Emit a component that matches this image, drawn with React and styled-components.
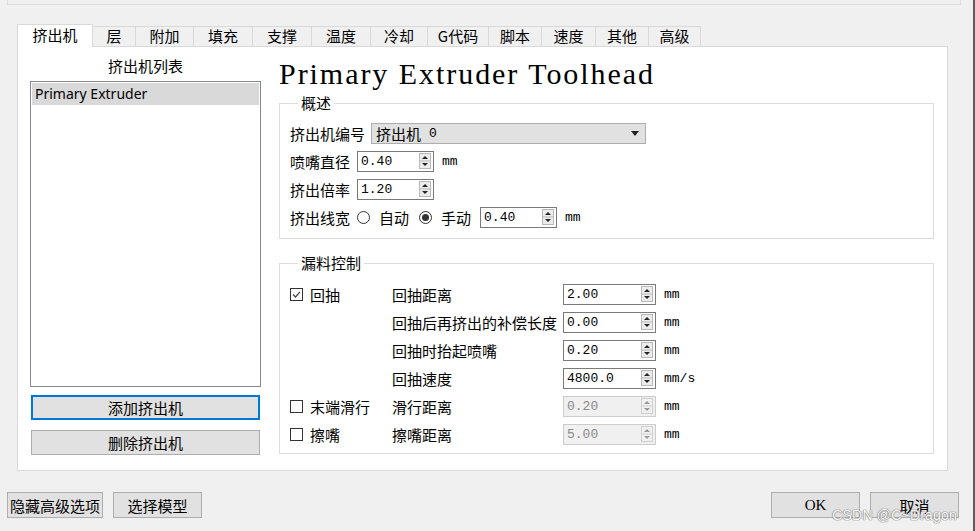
import React from 'react';
import styled, { createGlobalStyle } from 'styled-components';

const CJK = `"Noto Sans CJK SC", "Noto Sans", sans-serif`;
const MONO = `"Liberation Mono", "Noto Sans CJK SC", monospace`;

const Global = createGlobalStyle`
  html, body { margin: 0; padding: 0; background: #f0f0f0; }
  body { width: 975px; height: 531px; overflow: hidden; font-family: ${CJK}; color: #000; }
  * { box-sizing: border-box; }
`;

const Window = styled.div`
  position: relative;
  width: 975px;
  height: 531px;
  border-right: 2px solid #5c5c5c;
  background: #f0f0f0;
  display: flex;
  flex-direction: column;
`;

const TopStrip = styled.div`
  margin: 0 12px 0 7px;
  height: 5px;
  border: 1px solid #dcdcdc;
  border-top: none;
`;

const TabArea = styled.div`
  margin: 19px 0 0 17px;
  width: 931px;
`;

const TabBar = styled.div`
  display: flex;
  align-items: flex-end;
  height: 23px;
  margin-bottom: -1px;
  position: relative;
  z-index: 2;
`;

const Tab = styled.div`
  width: ${p => p.$w}px;
  height: ${p => (p.$active ? 23 : 21)}px;
  margin-right: -1px;
  display: flex;
  align-items: center;
  justify-content: center;
  padding-bottom: ${p => (p.$active ? 3 : 2)}px;
  font-size: 15px;
  line-height: 1;
  background: ${p => (p.$active ? '#fff' : '#f0f0f0')};
  border: 1px solid #d9d9d9;
  border-bottom: ${p => (p.$active ? 'none' : '1px solid #d9d9d9')};
  position: relative;
  z-index: ${p => (p.$active ? 1 : 0)};
`;

const Panel = styled.div`
  width: 931px;
  height: 425px;
  background: #fff;
  border: 1px solid #d9d9d9;
  display: flex;
  gap: 18px;
  padding: 0 13px 0 12px;
`;

const LeftCol = styled.div`
  width: 231px;
  display: flex;
  flex-direction: column;
  padding-top: 9px;
`;

const ListTitle = styled.div`
  height: 20px;
  line-height: 20px;
  text-align: center;
  font-size: 15px;
  margin-bottom: 5px;
`;

const ListBox = styled.div`
  height: 306px;
  border: 1px solid #828790;
  padding: 1px;
`;

const ListItem = styled.div`
  height: 22px;
  line-height: 22px;
  background: #d9d9d9;
  padding-left: 3px;
  font-family: "Noto Sans", sans-serif;
  font-size: 14px;
`;

const SideButton = styled.div`
  height: 25px;
  margin: ${p => p.$mt}px 1px 0 1px;
  background: #e1e1e1;
  border: ${p => (p.$focus ? '2px solid #0078d7' : '1px solid #adadad')};
  display: flex;
  align-items: center;
  justify-content: center;
  font-size: 15px;
`;

const RightCol = styled.div`
  width: 655px;
  display: flex;
  flex-direction: column;
`;

const Title = styled.div`
  margin-top: 8px;
  height: 36px;
  line-height: 38px;
  font-family: "Liberation Serif", serif;
  font-size: 30px;
  letter-spacing: 1.95px;
  white-space: nowrap;
`;

const Group = styled.fieldset`
  margin: ${p => p.$mt}px 0 0 0;
  padding: ${p => p.$pt}px 10px ${p => p.$pb}px 10px;
  border: 1px solid #dcdcdc;
  min-width: 0;
`;

const Legend = styled.legend`
  padding: 0 3px;
  margin-left: 8px;
  font-size: 15px;
  line-height: 18px;
  height: 18px;
`;

const Row = styled.div`
  height: 28px;
  display: flex;
  align-items: center;
  gap: ${p => p.$gap ?? 6}px;
`;

const Label = styled.span`
  font-size: 15px;
  line-height: 1;
  white-space: nowrap;
  margin-right: ${p => p.$mr ?? 0}px;
`;

const Combo = styled.div`
  width: 275px;
  height: 21px;
  background: #e1e1e1;
  border: 1px solid #adadad;
  display: flex;
  align-items: center;
  padding: 0 6px 0 4px;
  font-size: 15px;
`;

const ComboText = styled.span`
  flex: 1;
  display: flex;
  align-items: center;
  gap: 8px;
`;

const MonoText = styled.span`
  font-family: ${MONO};
  font-size: 13px;
`;

const SpinBox = styled.div`
  width: ${p => p.$w}px;
  height: 21px;
  background: ${p => (p.$disabled ? '#f0f0f0' : '#fff')};
  border: 1px solid ${p => (p.$disabled ? '#cccccc' : '#7a7a7a')};
  display: flex;
  align-items: center;
  padding: 0 2px 0 3px;
`;

const SpinValue = styled.span`
  flex: 1;
  font-family: ${MONO};
  font-size: 13px;
  color: ${p => (p.$disabled ? '#8a8a8a' : '#000')};
`;

const Unit = styled.span`
  font-family: ${MONO};
  font-size: 13px;
  margin-left: ${p => p.$ml ?? 2}px;
`;

const Box = styled.span`
  width: 13px;
  height: 13px;
  border: 1px solid #333;
  background: #fff;
  display: inline-flex;
  align-items: center;
  justify-content: center;
  flex: none;
`;

const RadioCircle = styled.span`
  width: 13px;
  height: 13px;
  border-radius: 50%;
  border: 1px solid #333;
  background: #fff;
  display: inline-flex;
  align-items: center;
  justify-content: center;
  flex: none;
  margin-right: 3px;
`;

const RadioDot = styled.span`
  width: 7px;
  height: 7px;
  border-radius: 50%;
  background: #333;
`;

const Grid = styled.div`
  display: grid;
  grid-template-columns: 102px 171px 93px auto;
  grid-auto-rows: 28px;
  align-items: center;
`;

const CheckCell = styled.div`
  display: flex;
  align-items: center;
  gap: 7px;
`;

const UnitCell = styled.div`
  padding-left: 8px;
  font-family: ${MONO};
  font-size: 13px;
`;

const Footer = styled.div`
  margin-top: 21px;
  display: flex;
  gap: 10px;
  padding: 0 14px 0 7px;
`;

const Spacer = styled.div`
  flex: 1;
`;

const FooterButton = styled.div`
  width: ${p => p.$w}px;
  height: 26px;
  background: #e1e1e1;
  border: 1px solid #adadad;
  display: flex;
  align-items: center;
  justify-content: center;
  font-size: 15px;
  font-family: ${p => (p.$serif ? `"Liberation Serif", serif` : CJK)};
`;

const Watermark = styled.div`
  position: absolute;
  right: 16px;
  bottom: 8px;
  font-family: "Liberation Sans", sans-serif;
  font-size: 14px;
  color: #fff;
  text-shadow: 0 0 1px #777, 0 0 1px #777, 0 0 1px #777;
  letter-spacing: 0.2px;
`;

const SpinButtons = ({ disabled }) => {
  const c = disabled ? '#9a9a9a' : '#222';
  return (
    <svg width="12" height="16" viewBox="0 0 12 16">
      <rect x="0.5" y="0.5" width="11" height="15" fill={disabled ? '#f0f0f0' : '#ececec'} stroke={disabled ? '#cfcfcf' : '#b8b8b8'} />
      <line x1="1" y1="8" x2="11" y2="8" stroke={disabled ? '#cfcfcf' : '#b8b8b8'} />
      <polygon points="3,6 6,3 9,6" fill={c} />
      <polygon points="3,10 9,10 6,13" fill={c} />
    </svg>
  );
};

const Spin = ({ value, w, disabled }) => (
  <SpinBox $w={w} $disabled={disabled}>
    <SpinValue $disabled={disabled}>{value}</SpinValue>
    <SpinButtons disabled={disabled} />
  </SpinBox>
);

const CheckBox = ({ checked }) => (
  <Box>
    {checked && (
      <svg width="11" height="11" viewBox="0 0 11 11">
        <path d="M2 5.5 L4.5 8 L9 2.8" fill="none" stroke="#444" strokeWidth="1.2" />
      </svg>
    )}
  </Box>
);

const Radio = ({ checked }) => (
  <RadioCircle>{checked && <RadioDot />}</RadioCircle>
);

const tabs = [
  ['挤出机', 76],
  ['层', 44],
  ['附加', 59],
  ['填充', 60],
  ['支撑', 60],
  ['温度', 60],
  ['冷却', 58],
  ['G代码', 62],
  ['脚本', 54],
  ['速度', 55],
  ['其他', 54],
  ['高级', 53],
];

const retraction = [
  { check: { label: '回抽', checked: true }, label: '回抽距离', value: '2.00', unit: 'mm' },
  { label: '回抽后再挤出的补偿长度', value: '0.00', unit: 'mm' },
  { label: '回抽时抬起喷嘴', value: '0.20', unit: 'mm' },
  { label: '回抽速度', value: '4800.0', unit: 'mm/s' },
  { check: { label: '末端滑行', checked: false }, label: '滑行距离', value: '0.20', unit: 'mm', disabled: true },
  { check: { label: '擦嘴', checked: false }, label: '擦嘴距离', value: '5.00', unit: 'mm', disabled: true },
];

export default function App() {
  return (
    <>
      <Global />
      <Window>
        <TopStrip />
        <TabArea>
          <TabBar>
            {tabs.map(([t, w], i) => (
              <Tab key={t} $w={w} $active={i === 0}>{t}</Tab>
            ))}
          </TabBar>
          <Panel>
            <LeftCol>
              <ListTitle>挤出机列表</ListTitle>
              <ListBox>
                <ListItem>Primary Extruder</ListItem>
              </ListBox>
              <SideButton $mt={8} $focus>添加挤出机</SideButton>
              <SideButton $mt={10}>删除挤出机</SideButton>
            </LeftCol>
            <RightCol>
              <Title>Primary Extruder Toolhead</Title>
              <Group $mt={3} $pt={7} $pb={7}>
                <Legend>概述</Legend>
                <Row>
                  <Label>挤出机编号</Label>
                  <Combo>
                    <ComboText>挤出机 <MonoText>0</MonoText></ComboText>
                    <svg width="8" height="5" viewBox="0 0 8 5">
                      <polygon points="0,0 8,0 4,5" fill="#222" />
                    </svg>
                  </Combo>
                </Row>
                <Row $gap={7}>
                  <Label>喷嘴直径</Label>
                  <Spin value="0.40" w={77} />
                  <Unit $ml={1}>mm</Unit>
                </Row>
                <Row $gap={7}>
                  <Label>挤出倍率</Label>
                  <Spin value="1.20" w={77} />
                </Row>
                <Row $gap={6}>
                  <Label $mr={1}>挤出线宽</Label>
                  <Radio />
                  <Label $mr={4}>自动</Label>
                  <Radio checked />
                  <Label $mr={3}>手动</Label>
                  <Spin value="0.40" w={77} />
                  <Unit $ml={2}>mm</Unit>
                </Row>
              </Group>
              <Group $mt={15} $pt={8} $pb={5}>
                <Legend>漏料控制</Legend>
                <Grid>
                  {retraction.map((r, i) => (
                    <React.Fragment key={i}>
                      <CheckCell>
                        {r.check && (
                          <>
                            <CheckBox checked={r.check.checked} />
                            <Label>{r.check.label}</Label>
                          </>
                        )}
                      </CheckCell>
                      <Label>{r.label}</Label>
                      <Spin value={r.value} w={93} disabled={r.disabled} />
                      <UnitCell>{r.unit}</UnitCell>
                    </React.Fragment>
                  ))}
                </Grid>
              </Group>
            </RightCol>
          </Panel>
        </TabArea>
        <Footer>
          <FooterButton $w={96}>隐藏高级选项</FooterButton>
          <FooterButton $w={89}>选择模型</FooterButton>
          <Spacer />
          <FooterButton $w={89} $serif>OK</FooterButton>
          <FooterButton $w={89}>取消</FooterButton>
        </Footer>
        <Watermark>CSDN @C~Dragon</Watermark>
      </Window>
    </>
  );
}
